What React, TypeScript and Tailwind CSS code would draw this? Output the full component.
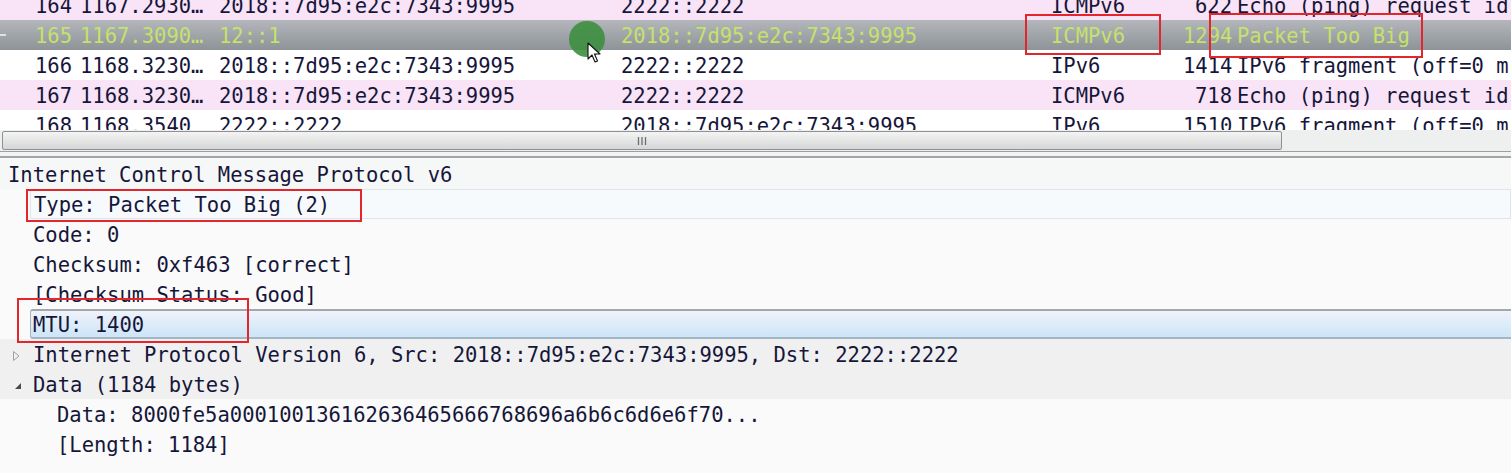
import React from 'react';

type Pkt = { no: string; time: string; src: string; dst: string; proto: string; len: string; info: string; kind: 'pink' | 'white' | 'sel' };

const packets: Pkt[] = [
  { no: '164', time: '1167.2930…', src: '2018::7d95:e2c:7343:9995', dst: '2222::2222', proto: 'ICMPv6', len: '622', info: 'Echo (ping) request id', kind: 'pink' },
  { no: '165', time: '1167.3090…', src: '12::1', dst: '2018::7d95:e2c:7343:9995', proto: 'ICMPv6', len: '1294', info: 'Packet Too Big', kind: 'sel' },
  { no: '166', time: '1168.3230…', src: '2018::7d95:e2c:7343:9995', dst: '2222::2222', proto: 'IPv6', len: '1414', info: 'IPv6 fragment (off=0 m', kind: 'white' },
  { no: '167', time: '1168.3230…', src: '2018::7d95:e2c:7343:9995', dst: '2222::2222', proto: 'ICMPv6', len: '718', info: 'Echo (ping) request id', kind: 'pink' },
  { no: '168', time: '1168.3540', src: '2222::2222', dst: '2018::7d95:e2c:7343:9995', proto: 'IPv6', len: '1510', info: 'IPv6 fragment (off=0 m', kind: 'white' },
];

const rowBg = {
  pink: 'bg-[#f9e3f6] text-[#16163a]',
  white: 'bg-white text-[#16163a]',
  sel: 'bg-gradient-to-b from-[#b3b7bb] to-[#8e9398] text-[#c4e26c]',
};

function PacketRow({ p }: { p: Pkt }) {
  return (
    <div className={`flex h-[30px] items-center overflow-hidden whitespace-pre pt-[3px] ${rowBg[p.kind]}`}>
      <div className="relative w-[72px] shrink-0 text-right">
        {p.kind === 'sel' && <span className="absolute left-0 top-[8px] h-[2px] w-[6px] bg-[#dfe3e6]" />}
        {p.no}
      </div>
      <div className="ml-[8px] w-[139px] shrink-0">{p.time}</div>
      <div className="w-[402px] shrink-0">{p.src}</div>
      <div className="w-[430px] shrink-0">{p.dst}</div>
      <div className="w-[132px] shrink-0">{p.proto}</div>
      <div className="w-[49px] shrink-0 text-right">{p.len}</div>
      <div className="ml-[5px] shrink-0">{p.info}</div>
    </div>
  );
}

function DetailRow({ children, indent, className = '' }: { children: React.ReactNode; indent: string; className?: string }) {
  return <div className={`flex h-[30px] items-center whitespace-pre pt-[3px] text-[#16163a] ${indent} ${className}`}>{children}</div>;
}

export default function App() {
  return (
    <div className="relative h-[473px] w-[1511px] overflow-hidden bg-white font-['DejaVu_Sans_Mono',monospace] text-[20.5px] leading-none">
      {/* packet list */}
      <div className="h-[130px] overflow-hidden">
        <div className="-mt-[10px]">
          {packets.map(p => (
            <PacketRow key={p.no} p={p} />
          ))}
        </div>
      </div>

      {/* horizontal scrollbar */}
      <div className="flex h-[22px] items-start border-b border-[#9c9fa1] bg-[#eef0ef]">
        <div className="ml-[2px] mt-[1px] flex h-[19px] w-[1280px] items-center justify-center rounded-[2px] border border-[#8e9092] bg-gradient-to-b from-[#f4f4f4] to-[#d5d6d7]">
          <svg width="10" height="8" viewBox="0 0 10 8">
            <path d="M1.5 0v8M5 0v8M8.5 0v8" stroke="#6b6d70" strokeWidth="1.3" />
          </svg>
        </div>
      </div>
      <div className="h-[4px] bg-[#f2f3f3]" />
      <div className="h-[2px] bg-[#a3a6a8]" />

      {/* packet details */}
      <div className="bg-[#f9faf9] pt-[1px]">
        <DetailRow indent="pl-[8px]" className="bg-[#f6f8f7]">Internet Control Message Protocol v6</DetailRow>
        <DetailRow indent="ml-[30px] pl-[3px]" className="rounded-l-[2px] border border-[#dfe5ea] bg-[#f7fafc]">Type: Packet Too Big (2)</DetailRow>
        <DetailRow indent="pl-[33px]">Code: 0</DetailRow>
        <DetailRow indent="pl-[33px]">Checksum: 0xf463 [correct]</DetailRow>
        <DetailRow indent="pl-[33px]">[Checksum Status: Good]</DetailRow>
        <div className="ml-[30px] flex h-[30px] items-center rounded-l-[3px] border-y-2 border-l border-t-[#a2a9ae] border-b-[#a3b6c6] border-l-[#a9b3bb] bg-gradient-to-b from-[#eff2fa] to-[#cce5f8] pl-[2px] pt-[2px] text-[#16163a]">
          MTU: 1400
        </div>
        <DetailRow indent="pl-[12px]" className="bg-[#f0f0f0]">
          <svg width="9" height="12" viewBox="0 0 9 12" className="mr-[12px]">
            <path d="M1.5 1.5 L7 6 L1.5 10.5 Z" fill="none" stroke="#a0a0a0" strokeWidth="1" />
          </svg>
          Internet Protocol Version 6, Src: 2018::7d95:e2c:7343:9995, Dst: 2222::2222
        </DetailRow>
        <DetailRow indent="pl-[14px]" className="bg-[#f0f0f0]">
          <svg width="8" height="8" viewBox="0 0 8 8" className="mr-[11px]">
            <path d="M7 1 L7 7 L1 7 Z" fill="#4a4a4a" />
          </svg>
          Data (1184 bytes)
        </DetailRow>
        <DetailRow indent="pl-[57px]">Data: 8000fe5a000100136162636465666768696a6b6c6d6e6f70...</DetailRow>
        <DetailRow indent="pl-[57px]">[Length: 1184]</DetailRow>
        <div className="h-[20px]" />
      </div>

      {/* annotations */}
      <div className="absolute left-[1025px] top-[14px] h-[41px] w-[136px] border-2 border-[#e3262b]" />
      <div className="absolute left-[1209px] top-[13px] h-[45px] w-[214px] border-2 border-[#e3262b]" />
      <div className="absolute left-[26px] top-[189px] h-[33px] w-[336px] border-2 border-[#e3262b]" />
      <div className="absolute left-[17px] top-[298px] h-[45px] w-[232px] border-2 border-[#e3262b]" />

      {/* cursor click highlight */}
      <div className="absolute left-[569px] top-[21px] h-[36px] w-[36px] rounded-full bg-[#3d8f3f] opacity-90" />
      <svg className="absolute left-[587px] top-[42px]" width="14" height="22" viewBox="0 0 14 22">
        <path d="M1 1 L1 17 L5 13 L8 20 L10.5 19 L7.5 12 L13 12 Z" fill="#fff" stroke="#111" strokeWidth="1.1" strokeLinejoin="round" />
      </svg>
    </div>
  );
}
